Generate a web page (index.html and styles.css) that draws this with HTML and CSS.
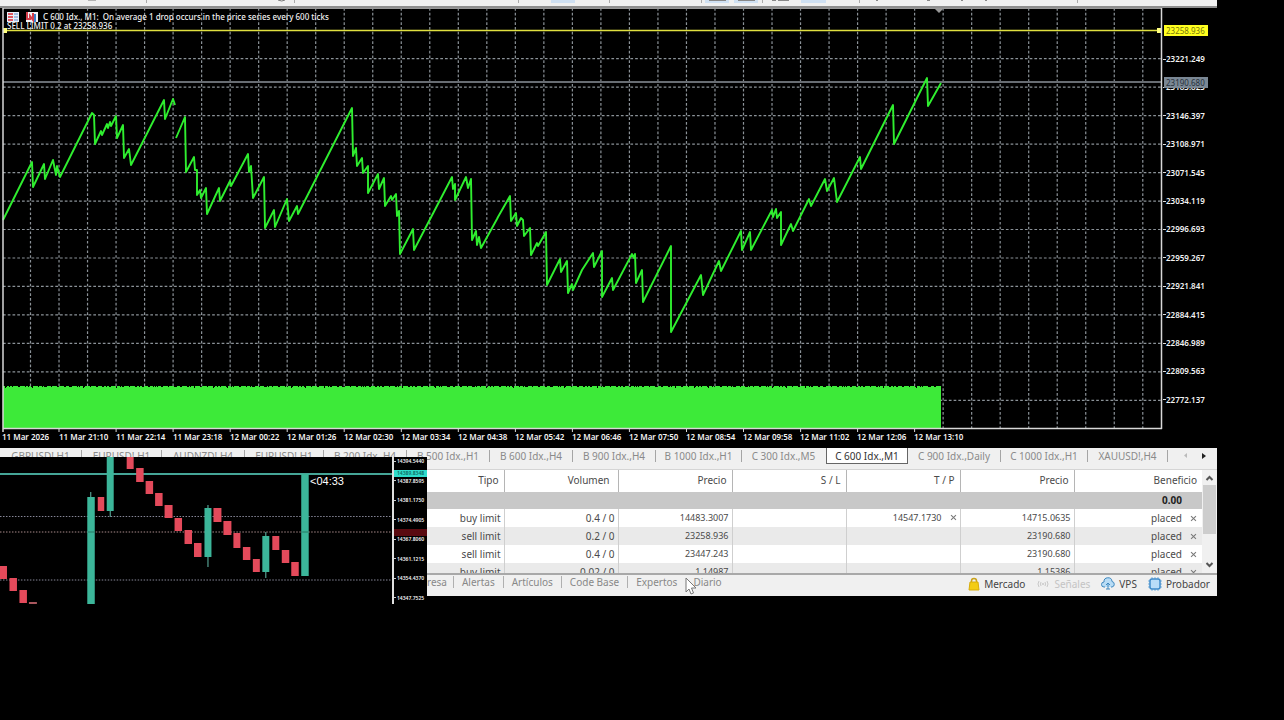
FILE: index.html
```html
<!DOCTYPE html>
<html lang="es">
<head>
<meta charset="utf-8">
<title>C 600 Idx.,M1</title>
<link rel="stylesheet" href="styles.css">
</head>
<body>
<main class="app">
  <header class="toolbar">
    <svg width="1217" height="6" viewBox="0 0 1217 6" aria-hidden="true">
      <path d="M88 0h8M278 0q4 2 7 0" stroke="#777" fill="none"/>
      <path d="M146.500 0v3M294.500 0v3M518.500 0v3M609.500 0v3M701.500 0v3M762.500 0v3M859.500 0v3M1077.500 0v3" stroke="#aaa"/>
      <path d="M551 0h24v3h-24zM705 0h24v3h-24zM734 0h24v3h-24zM801 0h25v3h-25z" fill="#cfe0f2"/>
      <path d="M709 .5h17M738 .5h17M772 .5h4M778 .5h11M876 .5h2M927 .5h3M961 .5h2M985 .5h2" stroke="#888"/>
    </svg>
  </header>

  <section class="chart" aria-label="C 600 Idx., M1">
    <div class="plot">
      <svg class="plot-svg" viewBox="0 0 1163 424" preserveAspectRatio="none" aria-hidden="true">
        <g transform="translate(0 -8)">
          <path id="grid" class="grid"/>
          <path d="M3 82H1162" stroke="#686d73" stroke-width="2"/>
          <path id="volume" fill="#3dea39"/>
          <path class="price" d="M3 220L32 162L33 187L44 164L45 179L53 160L56 175L57 166L60 177L92 113L94 115L95 144L101 131L102 135L107 124L108 128L110 122L111 126L116 116L117 138L123 125L124 158L129 149L131 165L164 100L165 119L173 99L175 105M176 138L185 117L186 172L194 157L195 170L197 170L197 195L200 190L201 198L206 188L207 214L219 188L220 201L230 181L231 186L248 154L249 172L251 166L253 198L264 177L265 228L274 210L275 227L287 199L289 221L297 206L298 214L352 108L353 156L356 148L357 166L362 158L363 173L368 166L368 193L378 174L379 189L384 178L385 206L391 196L392 200L396 194L397 216L399 211L400 254L413 229L414 250L452 177L453 189L455 184L455 200L466 177L468 188L471 179L472 240L476 231L477 245L479 237L481 248L497 219L498 217L510 196L511 221L516 213L517 226L521 218L523 220L524 236L530 228L531 255L537 243L538 246L546 232L547 285L560 259L561 272L567 261L568 293L572 284L573 290L582 270L593 253L594 267L602 251L602 297L612 278L613 290L632 254L634 258L635 254L636 283L642 270L643 302L671 246L671 332L701 275L703 295L719 261L721 271L741 231L742 250L750 232L751 250L772 210L773 217L776 209L777 218L781 212L781 245L791 224L793 231L809 199L811 206L825 179L827 191L834 178L837 202L860 157L861 169L893 105L894 144L927 78L928 106L941 83"/>
          <path d="M3 30.500H1162" stroke="#e0e040" stroke-width="1.600"/>
          <path d="M3 28h4v5h-4zM1157 28h4v5h-4z" fill="#ffff80"/>
          <path d="M934 8h10l-5 5z" fill="#999"/>
          <path d="M3 8.500H1162" stroke="#999"/>
          <path d="M3 8V432M1161.500 8V429" stroke="#d8d8d8" stroke-width="1.500"/>
          <path d="M3 428.500H1162" stroke="#d8d8d8" stroke-width="1.500"/>
          <path id="ticks" stroke="#d8d8d8"/>
        </g>
      </svg>
      <div class="chart-title">
        <svg width="32" height="12" viewBox="0 0 32 12" aria-hidden="true">
          <path d="M0 1h12v10H0z" fill="#e9f0fa"/><path d="M1 3h5M1 6h5M1 9h5" stroke="#dd5963" stroke-width="2"/><path d="M7 3h4M7 6h4M7 9h4" stroke="#5b87cf"/>
          <path d="M19 1h12v10H19z" fill="#f4f4f8"/><path d="M20 1v7h3V5l3 4V2" stroke="#d43f4c" stroke-width="2" fill="none"/><path d="M28 3v8" stroke="#3d7fcc" stroke-width="2"/>
        </svg>
        <span>C 600 Idx., M1:&nbsp; On average 1 drop occurs in the price series every 600 ticks</span>
      </div>
      <div class="order-label">SELL LIMIT 0.2 at 23258.936</div>
    </div>
    <div class="price-axis">
      <ul class="prices">
        <li>23221.249</li><li>23183.823</li><li>23146.397</li><li>23108.971</li><li>23071.545</li><li>23034.119</li><li>22996.693</li><li>22959.267</li><li>22921.841</li><li>22884.415</li><li>22846.989</li><li>22809.563</li><li>22772.137</li>
      </ul>
      <span class="tag tag-order">23258.936</span>
      <span class="tag tag-bid">23190.680</span>
    </div>
  </section>

  <ul class="times">
    <li>11 Mar 2026</li><li>11 Mar 21:10</li><li>11 Mar 22:14</li><li>11 Mar 23:18</li><li>12 Mar 00:22</li><li>12 Mar 01:26</li><li>12 Mar 02:30</li><li>12 Mar 03:34</li><li>12 Mar 04:38</li><li>12 Mar 05:42</li><li>12 Mar 06:46</li><li>12 Mar 07:50</li><li>12 Mar 08:54</li><li>12 Mar 09:58</li><li>12 Mar 11:02</li><li>12 Mar 12:06</li><li>12 Mar 13:10</li>
  </ul>

  <section class="dock">
    <nav class="tabs">
      <button>GBPUSD!,H1</button><button>EURUSD!,H1</button><button>AUDNZD!,H4</button><button>EURUSD!,H1</button><button>B 200 Idx.,H4</button><button>B 500 Idx.,H1</button><button>B 600 Idx.,H4</button><button>B 900 Idx.,H4</button><button>B 1000 Idx.,H1</button><button>C 300 Idx.,M5</button><button class="active">C 600 Idx.,M1</button><button>C 900 Idx.,Daily</button><button>C 1000 Idx.,H1</button><button>XAUUSD!,H4</button>
      <span class="tab-arrows">
        <button aria-label="Anterior"><svg width="6" height="8" viewBox="0 0 6 8"><path d="M4 1v5L1 3.500z" fill="#bbb"/></svg></button>
        <button aria-label="Siguiente"><svg width="6" height="8" viewBox="0 0 6 8"><path d="M1 1v6l4-3z" fill="#222"/></svg></button>
      </span>
    </nav>

    <div class="terminal">
      <div class="orders">
        <table>
          <colgroup><col class="c-type"><col class="c-mid"><col class="c-mid"><col class="c-mid"><col class="c-mid"><col class="c-mid"><col></colgroup>
          <thead><tr><th>Tipo</th><th class="wide">Volumen</th><th>Precio</th><th>S / L</th><th>T / P</th><th>Precio</th><th>Beneficio</th></tr></thead>
          <tbody>
            <tr class="sum"><td colspan="7">0.00</td></tr>
            <tr><td>buy limit</td><td>0.4 / 0</td><td class="num">14483.3007</td><td></td><td class="num">14547.1730<button class="x" aria-label="Quitar T/P"></button></td><td class="num">14715.0635</td><td>placed<button class="x" aria-label="Cancelar"></button></td></tr>
            <tr class="alt"><td>sell limit</td><td>0.2 / 0</td><td class="num">23258.936</td><td></td><td></td><td class="num">23190.680</td><td>placed<button class="x" aria-label="Cancelar"></button></td></tr>
            <tr><td>sell limit</td><td>0.4 / 0</td><td class="num">23447.243</td><td></td><td></td><td class="num">23190.680</td><td>placed<button class="x" aria-label="Cancelar"></button></td></tr>
            <tr class="alt"><td>buy limit</td><td>0.02 / 0</td><td class="num">1.14987</td><td></td><td></td><td class="num">1.15386</td><td>placed<button class="x" aria-label="Cancelar"></button></td></tr>
          </tbody>
        </table>
        <div class="scrollbar" aria-hidden="true">
          <svg width="9" height="6" viewBox="0 0 9 6"><path d="M1.500 5l3-3 3 3" fill="none" stroke="#555" stroke-width="2"/></svg>
          <span class="thumb"></span>
          <svg width="9" height="6" viewBox="0 0 9 6"><path d="M1.500 1l3 3 3-3" fill="none" stroke="#555" stroke-width="2"/></svg>
        </div>
      </div>
      <footer class="bottom">
        <nav class="panels">
          <button>resa</button><button>Alertas</button><button>Artículos</button><button>Code Base</button><button>Expertos</button><button>Diario</button>
        </nav>
        <div class="services">
          <button><svg width="12" height="14" viewBox="0 0 12 14"><path d="M3.500 6V4a2.500 2.500 0 0 1 5 0v2" fill="none" stroke="#c9a21c" stroke-width="1.500"/><path d="M2 5h8l1 8H1z" fill="#f3cc13" stroke="#d7ac0b"/></svg>Mercado</button>
          <button class="off"><svg width="14" height="14" viewBox="0 0 14 14"><path d="M3 4q-2 3 0 6M11 4q2 3 0 6M5 5q-1 2 0 4M9 5q1 2 0 4" fill="none" stroke="#c8c8c8"/><circle cx="7" cy="7" r="1" fill="#c8c8c8"/></svg>Señales</button>
          <button><svg width="14" height="14" viewBox="0 0 14 14"><path d="M4 10H3a2.500 2.500 0 0 1 0-5 4 4 0 0 1 8-.5 2.800 2.800 0 0 1 0 5.500h-1" fill="#b8dcf5" stroke="#3f88bf"/><path d="M7 6v6M5 12h4M5 8l2-2 2 2" fill="none" stroke="#3f88bf"/></svg>VPS</button>
          <button><svg width="14" height="14" viewBox="0 0 14 14"><path d="M4 0v14M7 0v14M10 0v14M0 4h14M0 7h14M0 10h14" stroke="#7ab2dd"/><rect x="2" y="2" width="10" height="10" rx="2" fill="#b8dcf8" stroke="#3f8bca" stroke-width="1.500"/></svg>Probador</button>
        </div>
      </footer>
    </div>

    <aside class="mini" aria-label="M1">
      <svg class="mini-svg" viewBox="0 457 393 147" preserveAspectRatio="none" aria-hidden="true">
        <path d="M0 516.500H392M0 580H392" stroke="#889" stroke-dasharray="1.500 1.500"/>
        <path d="M0 532H392" stroke="#a98b8b" stroke-dasharray="1.500 1.500"/>
        <path d="M0 474H393" stroke="#45a597" stroke-width="2"/>
        <path d="M91 492V604M110.500 457V517M208.500 505V567M266.500 532V578" stroke="#65bfae"/>
        <path fill="#3cb69a" d="M87.500 497h7.500v107h-7.500zM107 457h7v54h-7zM205 508h7v49h-7zM263 536h7v36h-7zM302 474h7.500v102h-7.500z"/>
        <path fill="#e44a5b" d="M0 566h7v13H0zM9.500 578h7.500v13H9.500zM19.500 590h7.500v13h-7.500zM98 497h6.500v14H98zM127 457h7v12h-7zM136.500 468h7.500v14h-7.500zM146 481h7.500v13H146zM155.500 493h7.500v13h-7.500zM165 505h8v13h-8zM175 518h7.500v13H175zM185 530h7.500v14H185zM194.500 543h7.500v14h-7.500zM214 508h8v14h-8zM224 521h8v14h-8zM234 533h7v15h-7zM243.500 547h7.500v13h-7.500zM253.500 559h7v13h-7zM273 536h7v14h-7zM282.500 550h7.500v13h-7.500zM292 562h7.500v14H292z"/>
        <path d="M29 603h8" stroke="#a9575e" stroke-width="2"/>
        <path d="M88 532h7M303 532h6" stroke="#267865"/>
      </svg>
      <span class="countdown">&lt;04:33</span>
      <div class="mini-axis">
        <ul><li>14394.5440</li><li>14387.8595</li><li>14381.1750</li><li>14374.4905</li><li>14367.8060</li><li>14361.1215</li><li>14354.4370</li><li>14347.7525</li></ul>
        <span class="mini-tag bid">14389.8348</span>
        <span class="mini-tag ask"></span>
      </div>
    </aside>

    <svg class="cursor" width="12" height="18" viewBox="0 0 12 18" aria-hidden="true"><path d="M1 1v14l3-3 2 5 2.500-1-2-5H11z" fill="#fff" stroke="#777"/></svg>
  </section>
</main>
<script src="chart.js"></script>
</body>
</html>
```

FILE: styles.css
```css
* { box-sizing: border-box; }
body {
  min-height: 100vh;
  margin: 0;
  background: #000;
  color: #4a4a4a;
  font: 10px/12px "Noto Sans", "Open Sans", sans-serif;
}
ul { list-style: none; margin: 0; padding: 0; }
button {
  margin: 0;
  padding: 0;
  border: 0;
  background: none;
  color: inherit;
  font: inherit;
  white-space: nowrap;
}
.app { padding-right: 67px; }

.toolbar {
  height: 8px;
  overflow: hidden;
  background: #f0f0f0;
  border-bottom: 2px solid #8e8e8e;
}
.toolbar svg { display: block; }

/* Main chart */
.chart { display: flex; height: 424px; }
.plot { position: relative; flex: 1; min-width: 0; }
.plot-svg { display: block; width: 100%; height: 100%; }
.grid { fill: none; stroke: #8b9298; stroke-width: 1.200; stroke-dasharray: 2.700 2.053; }
.price { fill: none; stroke: #2fee2f; stroke-width: 1.900; stroke-linejoin: round; }
.chart-title {
  position: absolute;
  top: 3px;
  left: 7px;
  display: flex;
  align-items: center;
  gap: 4px;
  color: #f2f2f2;
  font-size: 8px;
  font-weight: 500;
  white-space: nowrap;
}
.order-label {
  position: absolute;
  top: 12px;
  left: 7px;
  color: #f2f2f2;
  font-size: 8px;
  font-weight: 500;
  white-space: nowrap;
}
.price-axis {
  position: relative;
  width: 54px;
  padding: 45px 0 26px;
  color: #f4f4f4;
  font-size: 8px;
  font-weight: 600;
}
.prices {
  display: flex;
  flex-direction: column;
  justify-content: space-between;
  height: 100%;
}
.prices li { display: flex; align-items: center; }
.prices li::before { content: ""; width: 3px; height: 1px; background: #ddd; }
.tag {
  position: absolute;
  left: 1px;
  width: 44px;
  height: 11px;
  padding-left: 2px;
  line-height: 11px;
  font-weight: 400;
}
.tag-order { top: 17px; background: #ffff1f; color: #77770a; }
.tag-bid { top: 69px; background: #7a8794; color: #27313c; }
.times {
  display: grid;
  grid-template-columns: repeat(17, 57px);
  height: 16px;
  padding: 0 0 0 2px;
  color: #f4f4f4;
  font-size: 8px;
  line-height: 10px;
  font-weight: 600;
  white-space: nowrap;
}

/* Dock */
.dock { position: relative; background: #f0f0f0; }
.tabs {
  display: grid;
  grid-template-columns: 82px 80px 83px 79px 83px 83px 83px 83px 86px 84px 82px 93px 87px 80px 1fr;
  height: 21px;
  padding-bottom: 5px;
  color: #8a8a8a;
}
.tabs > button { border-right: 1px solid #a5a5a5; margin: 2px 0; line-height: 12px; }
.tabs > button:nth-child(10) { border-right-color: transparent; }
.tabs > .active {
  margin: 0;
  border: 1px solid #666;
  border-top: 0;
  background: #fff;
  color: #333;
}
.tab-arrows { display: flex; gap: 12px; padding-left: 15px; align-items: center; }
.tab-arrows button { display: flex; }
.terminal { margin-left: 427px; }
.orders {
  display: flex;
  height: 104px;
  overflow: hidden;
  background: #fff;
  border-top: 1px solid #d5d5d5;
}
table { flex: 1; width: 100%; table-layout: fixed; border-collapse: collapse; align-self: flex-start; }
.c-type { width: 77px; }
.c-mid { width: 114px; }
th { height: 22px; padding: 0 5px 2px 0; font-weight: 400; text-align: right; border-right: 1px solid #b5b5b5; }
th.wide { padding-right: 8px; }
td { height: 18px; padding: 0 3px 1px 0; text-align: right; border-right: 1px solid #cfcfcf; white-space: nowrap; }
th:last-child, td:last-child { border-right: 0; padding-right: 5px; }
.num { font-size: 9px; }
.sum td { height: 17px; padding-right: 20px; background: #c8c8c8; color: #222; font-weight: 700; }
.sum td:last-child { padding-right: 20px; }
.alt { background: #eaeaea; }
.x { position: relative; width: 7px; height: 7px; margin-left: 8px; }
.x::before, .x::after {
  content: "";
  position: absolute;
  top: 3px;
  left: 0;
  width: 7px;
  height: 1px;
  background: #777;
  transform: rotate(45deg);
}
.x::after { transform: rotate(-45deg); }
.scrollbar {
  display: flex;
  flex-direction: column;
  align-items: center;
  gap: 4px;
  width: 15px;
  padding: 5px 0;
  background: #f0f0f0;
}
.thumb { width: 13px; height: 49px; background: #cdcdcd; }
.scrollbar svg:last-child { margin-top: auto; }
.bottom {
  display: flex;
  justify-content: space-between;
  height: 23px;
  border-top: 2px solid #a8a8a8;
}
.panels { display: flex; align-items: flex-start; padding-top: 1px; color: #888; }
.panels button { padding: 0 8px; border-right: 1px solid #b0b0b0; }
.panels button:first-child { padding-left: 0; padding-right: 6px; }
.panels button:nth-last-child(-n+2) { border-right: 0; }
.services { display: flex; align-items: flex-start; gap: 11px; padding: 2px 7px 0 0; color: #444; }
.services button { display: flex; align-items: center; gap: 4px; }
.services .off { color: #c4c4c4; }

/* Floating candle window */
.mini {
  position: absolute;
  top: 9px;
  left: 0;
  display: flex;
  width: 427px;
  height: 147px;
  background: #000;
}
.mini-svg { flex: 1; min-width: 0; height: 100%; }
.countdown {
  position: absolute;
  top: 18px;
  left: 310px;
  color: #fff;
  font: 11px/12px "Liberation Sans", Arial, sans-serif;
}
.mini-axis {
  position: relative;
  width: 35px;
  border-left: 2px solid #e0e0e0;
  color: #f4f4f4;
  font-size: 5px;
  font-weight: 600;
  line-height: 8px;
}
.mini-axis ul { display: flex; flex-direction: column; justify-content: space-between; height: 145px; }
.mini-axis li { display: flex; align-items: center; gap: 1px; }
.mini-axis li::before { content: ""; width: 2px; height: 1px; background: #ccc; }
.mini-tag { position: absolute; left: 0; width: 33px; height: 7px; padding-left: 3px; line-height: 7px; }
.bid { top: 13px; background: #2fdccb; color: #0d6a62; }
.ask { top: 72px; background: #5a0a10; }

.cursor { position: absolute; top: 129px; left: 685px; }
```

FILE: chart.js
```js
// Grid: 40 vertical and 13 horizontal dashed lines.
let grid = '';
for (let i = 0; i < 40; i++) grid += `M${(30.5 + i * 28.52).toFixed(2)} 8V428`;
for (let i = 0; i < 13; i++) grid += `M3 ${(58.7 + i * 28.47).toFixed(2)}H1162`;
document.getElementById('grid').setAttribute('d', grid);

// Tick volume: an almost even band with a slightly ragged top edge.
let volume = 'M3 428';
for (let x = 3; x < 941; x++) volume += `V${386 + ((x * 7919) % 13 > 9 ? 1 : 0) + ((x * x * 31) % 37 > 31 ? 1 : 0)}H${x + 1}`;
document.getElementById('volume').setAttribute('d', volume + 'V428Z');

// Time axis ticks under the plot.
let ticks = '';
for (let i = 1; i <= 16; i++) ticks += `M${(2 + i * 57.04).toFixed(1)} 429v3`;
document.getElementById('ticks').setAttribute('d', ticks);
```
